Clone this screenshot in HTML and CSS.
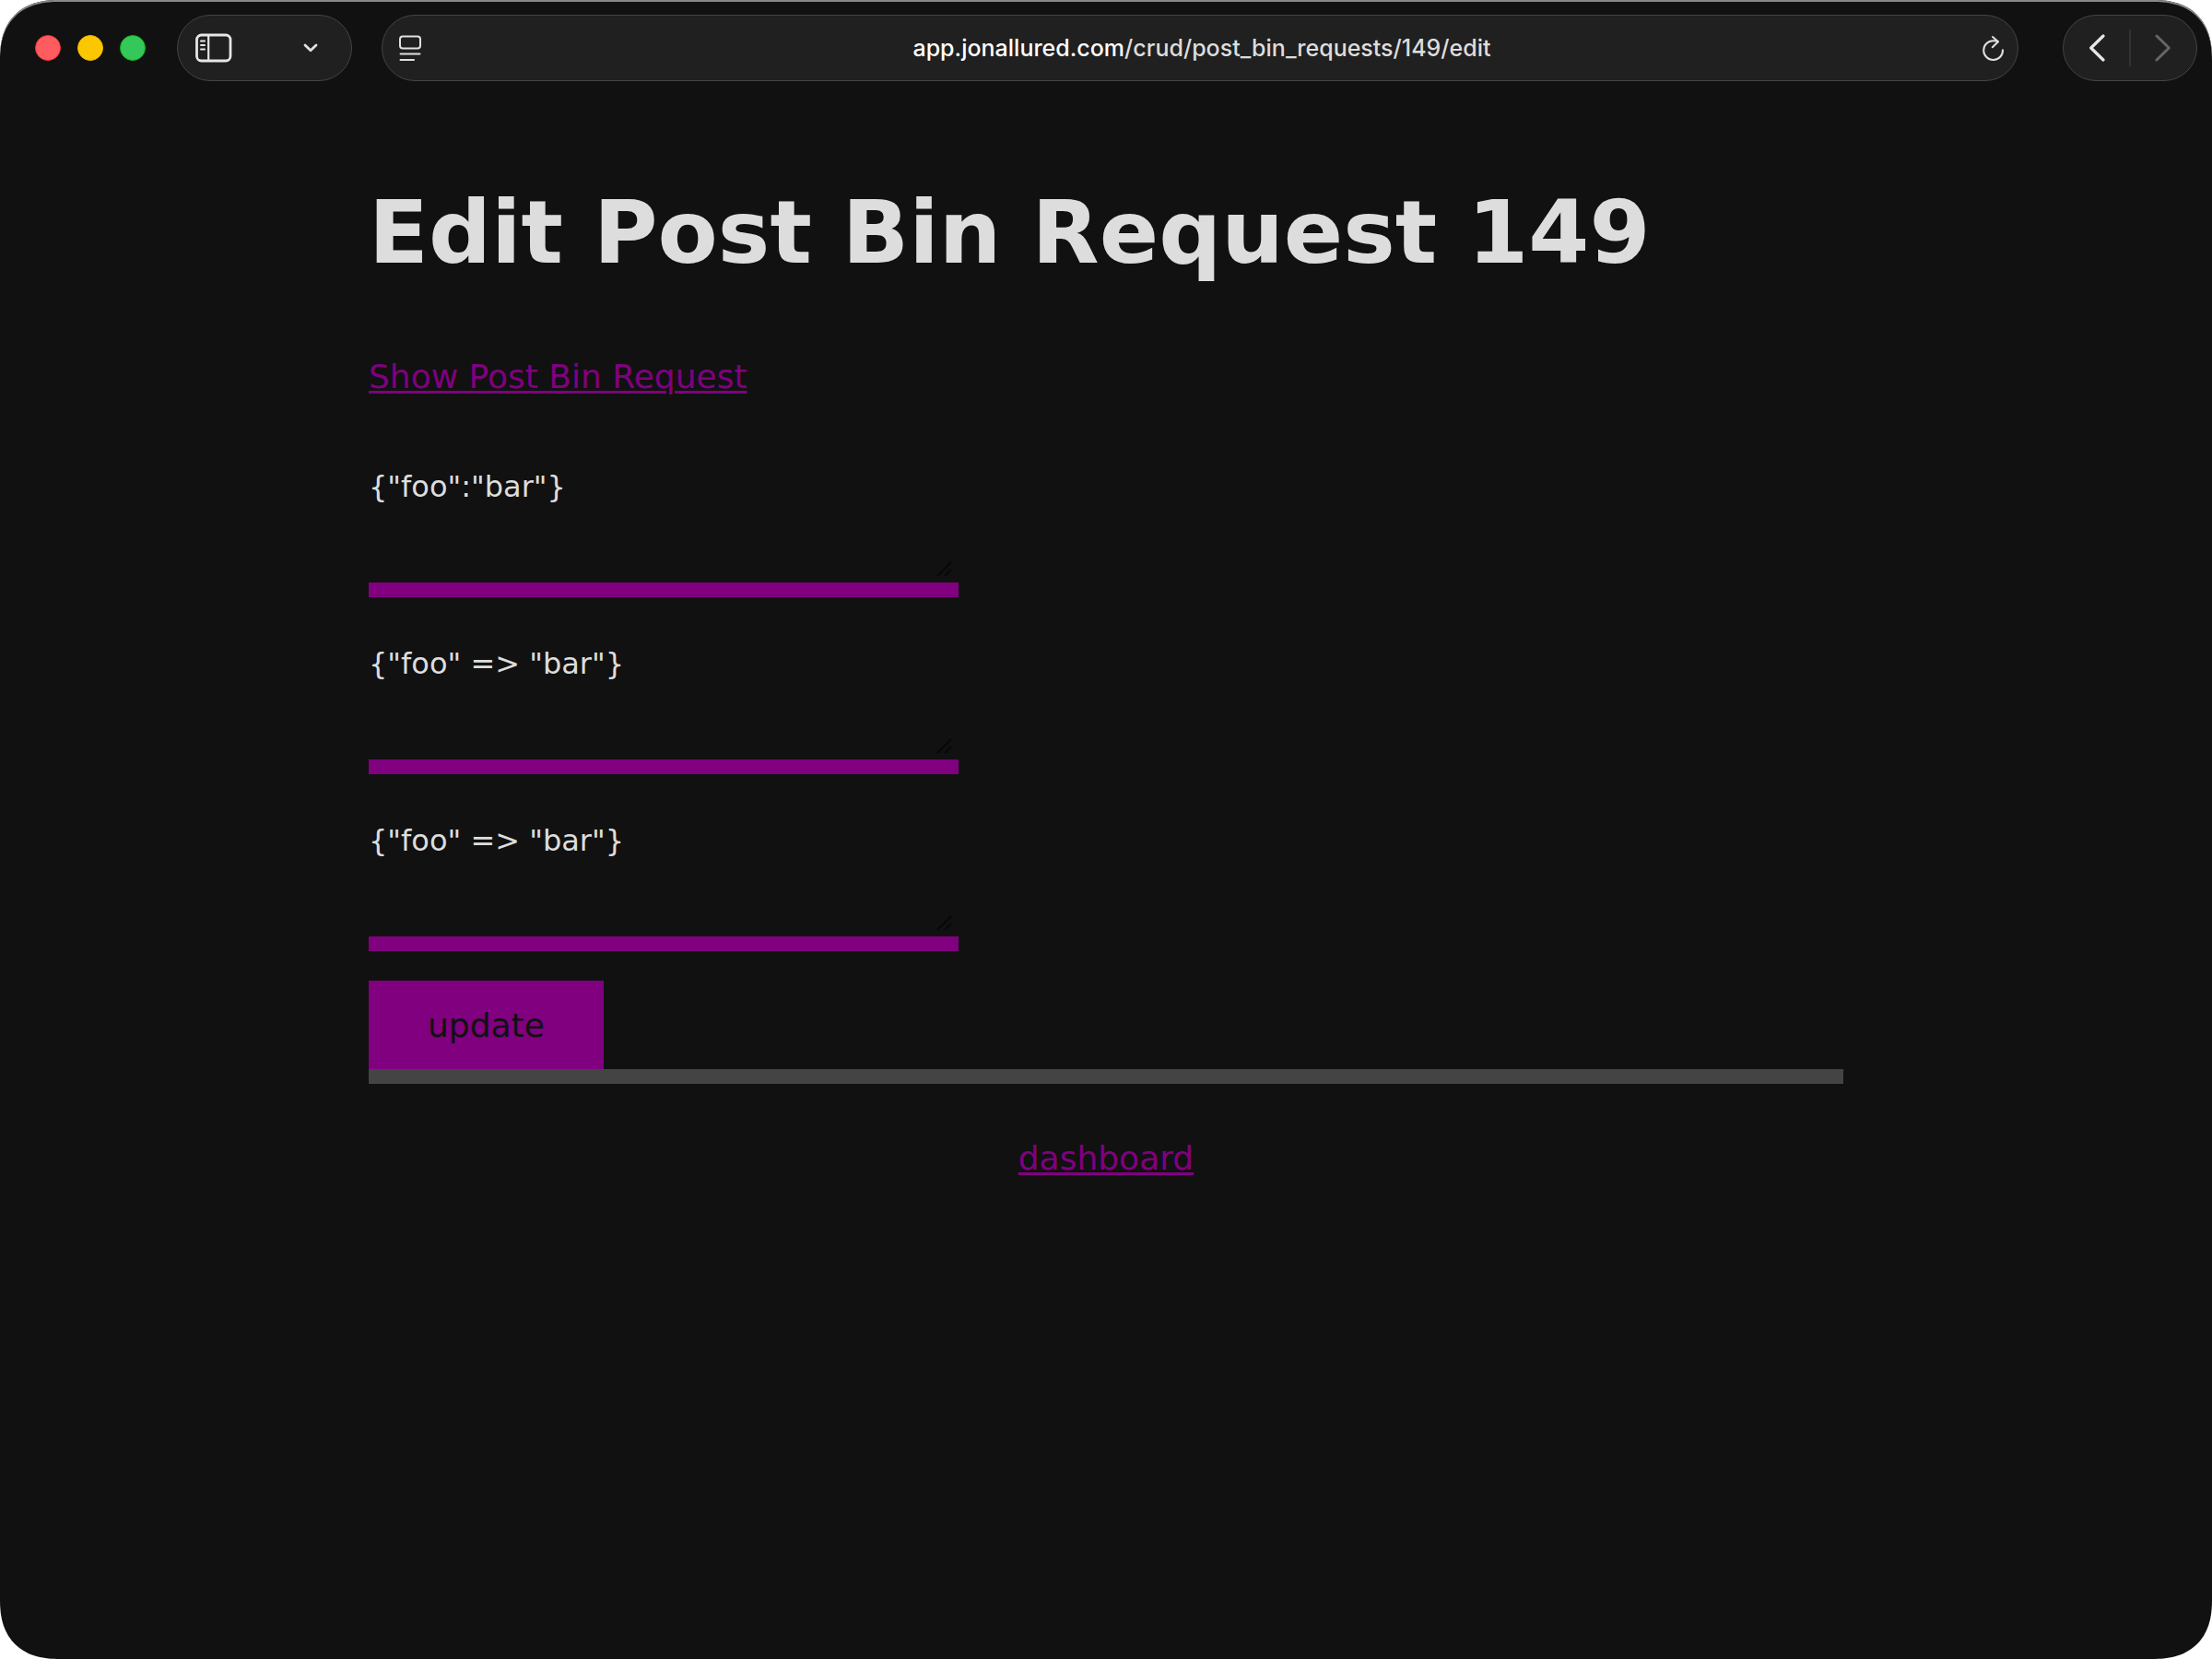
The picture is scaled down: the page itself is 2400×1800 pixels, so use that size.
FILE: index.html
```html
<!DOCTYPE html>
<html lang="en">
<head>
  <meta charset="UTF-8" />
  <meta name="viewport" content="width=device-width, initial-scale=1.0" />
  <title>Edit Post Bin Request 149</title>
  <link rel="stylesheet" href="styles.css">
</head>
<body>

  <div class="window">
    <header class="toolbar">
      <div class="lights">
        <button class="light close" aria-label="Close"></button>
        <button class="light minimize" aria-label="Minimize"></button>
        <button class="light expand" aria-label="Zoom"></button>
      </div>

      <div class="pill sidebar-pill">
        <button class="icon-btn" aria-label="Show sidebar">
          <svg width="40" height="32" viewBox="0 0 40 32" fill="none" stroke="#e6e6e6" stroke-linecap="round">
            <rect x="1.5" y="2" width="36.5" height="28" rx="5" stroke-width="2.8" />
            <path d="M14.2 2v28" stroke-width="2.2" />
            <path d="M6 8.5h4M6 13h4M6 17.5h4" stroke-width="2" />
          </svg>
        </button>
        <button class="icon-btn" aria-label="Tab groups">
          <svg width="16" height="12" viewBox="0 0 16 12" fill="none" stroke="#e0e0e0" stroke-width="2.8" stroke-linecap="round" stroke-linejoin="round">
            <path d="M2 3l6 5.8L14 3" />
          </svg>
        </button>
      </div>

      <div class="pill address">
        <button class="icon-btn" aria-label="Page menu">
          <svg width="24" height="32" viewBox="0 0 24 32" fill="none" stroke="#e0e0e0" stroke-width="2" stroke-linecap="round">
            <rect x="1" y="3.5" width="22" height="13" rx="3" />
            <path d="M1.5 22.5h21M1.5 29h14.5" />
          </svg>
        </button>
        <button class="url"><span class="domain">app.jonallured.com</span>/crud/post_bin_requests/149/edit</button>
        <button class="icon-btn" aria-label="Reload">
          <svg width="24" height="32" viewBox="0 0 24 32" fill="none" stroke="#e0e0e0" stroke-width="2" stroke-linecap="round" stroke-linejoin="round">
            <path d="M22 18.3a10.4 10.4 0 1 1-10.4-10.1c2 0 3.6.2 5 .8" />
            <path d="M11 4l6 5.3-6.2 6" />
          </svg>
        </button>
      </div>

      <div class="pill history">
        <button class="icon-btn" aria-label="Back">
          <svg width="18" height="32" viewBox="0 0 18 32" fill="none" stroke="#e6e6e6" stroke-width="3.2" stroke-linecap="round" stroke-linejoin="round">
            <path d="M15 3L1.700 16 15 29" />
          </svg>
        </button>
        <span class="divider"></span>
        <button class="icon-btn" aria-label="Forward" disabled>
          <svg width="18" height="32" viewBox="0 0 18 32" fill="none" stroke="#666" stroke-width="3" stroke-linecap="round" stroke-linejoin="round">
            <path d="M3 3l13.300 13L3 29" />
          </svg>
        </button>
      </div>
    </header>

    <main class="page">
      <h1 class="title">Edit Post Bin Request 149</h1>
      <p class="links"><a href="/crud/post_bin_requests/149">Show Post Bin Request</a></p>

      <form class="form">
        <div class="field">
          <textarea class="area" name="body" aria-label="Body">{"foo":"bar"}</textarea>
          <svg class="grip" width="18" height="18" viewBox="0 0 18 18" stroke="#080808" stroke-width="2"><path d="M1 17L16 2M9 17l7-7" /></svg>
        </div>
        <div class="field">
          <textarea class="area" name="headers" aria-label="Headers">{"foo" =&gt; "bar"}</textarea>
          <svg class="grip" width="18" height="18" viewBox="0 0 18 18" stroke="#080808" stroke-width="2"><path d="M1 17L16 2M9 17l7-7" /></svg>
        </div>
        <div class="field">
          <textarea class="area" name="params" aria-label="Params">{"foo" =&gt; "bar"}</textarea>
          <svg class="grip" width="18" height="18" viewBox="0 0 18 18" stroke="#080808" stroke-width="2"><path d="M1 17L16 2M9 17l7-7" /></svg>
        </div>
        <button class="submit" type="submit">update</button>
      </form>

      <footer class="footer">
        <a href="/dashboard">dashboard</a>
      </footer>
    </main>
  </div>

</body>
</html>
```
FILE: styles.css
```css
* {
  box-sizing: border-box;
}

body {
  margin: 0;
  background: white;
  color: #ddd;
  font-family: Verdana, "DejaVu Sans", sans-serif;
  font-size: 36px;
}

button {
  border: none;
  padding: 0;
  background: none;
  color: inherit;
  font: inherit;
}

a {
  color: purple;
  text-decoration-thickness: 3px;
  text-underline-offset: 3px;
}

.window {
  min-height: 100vh;
  background: #111;
  border-radius: 64px;
  corner-shape: superellipse(1.25);
  box-shadow: inset 0 2px 0 #888;
}

/* browser toolbar */
.toolbar {
  display: flex;
  align-items: center;
  padding: 16px 16px 16px 38px;
}

.lights {
  display: flex;
  gap: 18px;
  margin-right: 34px;
}

.light {
  width: 28px;
  height: 28px;
  border-radius: 50%;
}

.close {
  background: #ff5c60;
  border: 1px solid #f5303a;
}

.minimize {
  background: #fbc800;
  border: 1px solid #f0b400;
}

.expand {
  background: #34c85a;
  border: 1px solid #10b020;
}

.pill {
  display: flex;
  align-items: center;
  justify-content: space-between;
  height: 72px;
  background: #202020;
  border: 1px solid #444;
  border-radius: 36px;
}

.icon-btn {
  display: flex;
}

.sidebar-pill {
  width: 190px;
  padding: 0 36px 0 19px;
  margin-right: 32px;
}

.address {
  flex: 1;
  padding: 0 14px 0 18px;
  margin-right: 48px;
}

.url {
  font-family: Inter, sans-serif;
  font-size: 25px;
  font-weight: 500;
}

.domain {
  color: white;
}

.history {
  width: 146px;
  padding: 0 28px;
}

.divider {
  width: 2px;
  height: 40px;
  background: #333;
}

/* page content */
.page {
  width: 1600px;
  max-width: 90%;
  margin: 0 auto;
  padding-top: 88px;
}

.title {
  margin: 0;
  font-size: 95px;
  line-height: 120px;
}

.links {
  margin: 72px 0 54px;
  line-height: 50px;
}

.form {
  display: flex;
  flex-direction: column;
  align-items: flex-start;
  gap: 32px;
}

.field {
  position: relative;
  width: 40%;
}

.area {
  display: block;
  width: 100%;
  height: 160px;
  padding: 20px 0;
  background: #111;
  border: none;
  border-bottom: 16px solid purple;
  color: #ddd;
  font-family: inherit;
  font-size: 32px;
  line-height: 40px;
  resize: none;
}

.grip {
  position: absolute;
  right: 6px;
  bottom: 22px;
  pointer-events: none;
}

.submit {
  padding: 24px 64px 22px;
  background: purple;
  color: #111;
  line-height: 50px;
}

.footer {
  padding: 56px 0;
  border-top: 16px solid #444;
  line-height: 50px;
  text-align: center;
}
```
